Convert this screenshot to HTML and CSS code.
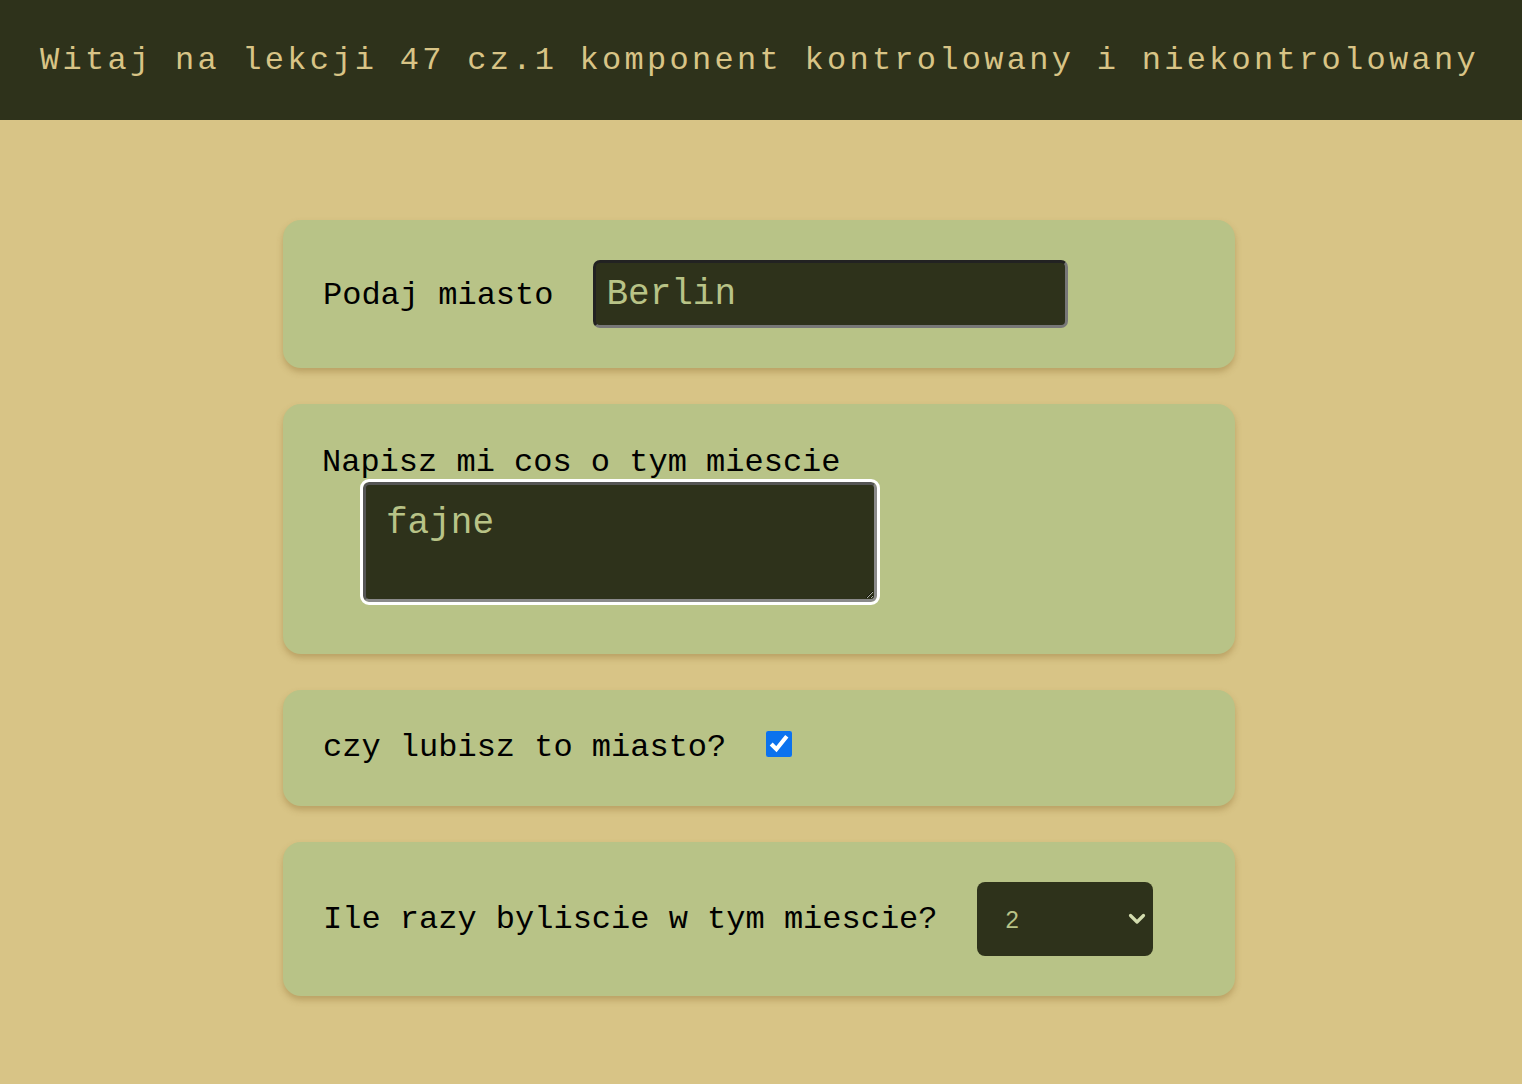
FILE: index.html
```html
<!DOCTYPE html>
<html lang="pl">
<head>
<meta charset="utf-8">
<title>Lekcja 47</title>
<link rel="stylesheet" href="styles.css">
</head>
<body>
<header class="topbar">
  <h1 class="title">Witaj na lekcji 47 cz.1 komponent kontrolowany i niekontrolowany</h1>
</header>
<main class="content">
  <section class="card">
    <label class="row row-baseline">
      <span class="label">Podaj miasto</span>
      <input class="text-input" type="text" value="Berlin">
    </label>
  </section>
  <section class="card">
    <label class="block">
      <span class="label label-block">Napisz mi cos o tym miescie</span>
      <textarea class="area">fajne</textarea>
    </label>
  </section>
  <section class="card">
    <label class="row row-top">
      <span class="label label-line">czy lubisz to miasto?</span>
      <input class="check" type="checkbox" checked>
    </label>
  </section>
  <section class="card">
    <label class="row row-select">
      <span class="label">Ile razy byliscie w tym miescie?</span>
      <span class="select-wrap">
        <select class="select">
          <option>1</option>
          <option selected>2</option>
          <option>3</option>
        </select>
        <svg class="chevron" width="18" height="12" viewBox="0 0 18 12" aria-hidden="true">
          <path d="M2.5 2.5 L9 9 L15.5 2.5" fill="none" stroke="#d3dcae" stroke-width="3.2" stroke-linecap="round" stroke-linejoin="round"/>
        </svg>
      </span>
    </label>
  </section>
</main>
</body>
</html>
```

FILE: styles.css
```css
html, body {
  margin: 0;
  padding: 0;
}
body {
  background: #d8c486;
  font-family: "Liberation Mono", "Courier New", monospace;
  color: #000;
  min-height: 1084px;
}
.topbar {
  background: #2e321b;
  height: 120px;
  display: flex;
  align-items: center;
}
.title {
  margin: 0;
  padding-left: 40px;
  font-weight: normal;
  font-size: 32px;
  letter-spacing: 3.28px;
  color: #d8c486;
  white-space: nowrap;
}
.content {
  width: 952px;
  margin: 100px 0 0 calc(50% - 478px);
  display: flex;
  flex-direction: column;
  gap: 36px;
}
.card {
  background: #b8c387;
  border-radius: 18px;
  padding: 40px;
  box-shadow: 0 4px 6px rgba(150, 120, 60, 0.45);
}
.row {
  display: flex;
  align-items: center;
  gap: 40px;
}
.row-baseline {
  align-items: baseline;
}
.row-top {
  align-items: flex-start;
}
.row-select {
  gap: 39px;
}
.label {
  font-size: 32px;
}
.label-line {
  line-height: 36px;
}
.text-input {
  width: 475px;
  height: 68px;
  box-sizing: border-box;
  background: #2e321b;
  color: #b8c387;
  font-family: "Liberation Mono", "Courier New", monospace;
  font-size: 36px;
  padding: 0 10px;
  border: 3px solid;
  border-color: #222 #777 #777 #222;
  border-radius: 7px;
}
.block {
  display: block;
}
.label-block {
  display: block;
  line-height: 38px;
  margin-left: -1px;
}
.area {
  display: block;
  margin: 0 0 12px 40px;
  width: 514px;
  height: 120px;
  box-sizing: border-box;
  background: #2e321b;
  color: #b8c387;
  font-family: "Liberation Mono", "Courier New", monospace;
  font-size: 36px;
  line-height: 1.15;
  padding: 18px 20px 16px;
  border: 3px solid;
  border-color: #555 #8a8a8a #8a8a8a #555;
  outline: 3px solid #fff;
  border-radius: 6px;
  resize: both;
}
.check {
  width: 26px;
  height: 26px;
  margin: 1px 0 0;
  accent-color: #0b72ee;
}
.select-wrap {
  position: relative;
  display: inline-block;
}
.select {
  display: block;
  appearance: none;
  -webkit-appearance: none;
  width: 176px;
  height: 74px;
  background: #2e321b;
  color: #b8c387;
  border: none;
  border-radius: 8px;
  font-family: "Liberation Sans", Arial, sans-serif;
  font-size: 24px;
  padding: 0 12px 0 29px;
}
.chevron {
  position: absolute;
  right: 7px;
  top: 31px;
  pointer-events: none;
}
```
